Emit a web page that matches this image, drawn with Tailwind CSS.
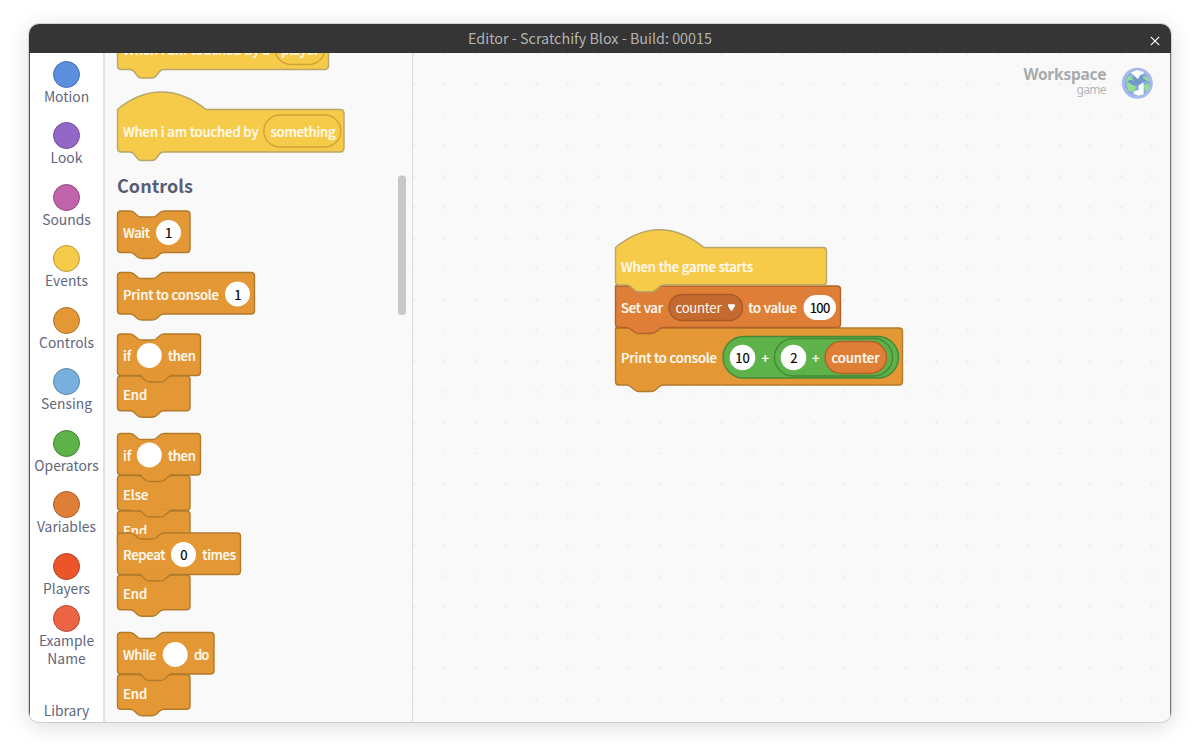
<!DOCTYPE html>
<html lang="en">
<head>
<meta charset="utf-8">
<title>Editor - Scratchify Blox</title>
<script src="https://cdn.jsdelivr.net/npm/@tailwindcss/browser@4"></script>
</head>
<body class="w-[1200px] h-[755px] overflow-hidden bg-white pt-6 pl-[29px] font-['Noto_Sans_CJK_SC','Noto_Sans',sans-serif]">
<div class="w-[1142px] h-[698px] rounded-[10px] overflow-hidden flex flex-col bg-[#f9f9f9] shadow-[0_4px_22px_rgba(0,0,0,0.14),0_0_0_1px_rgba(0,0,0,0.12)]">
  <header class="h-[29px] shrink-0 bg-[#353535] grid grid-cols-[40px_1fr_40px] items-center text-[#b4b4b4]">
    <span></span>
    <h1 class="text-center text-[14.35px] leading-[28px] pb-[2px] whitespace-nowrap -translate-x-[10px]">Editor - Scratchify Blox - Build: 00015</h1>
    <svg class="w-3 h-3 ml-[17.5px] mt-[4px]" viewBox="0 0 12 12" fill="none" stroke="#fff" stroke-width="1.2"><path d="M1.800 1.800l8.400 8.400M10.200 1.800l-8.400 8.400"/></svg>
  </header>
  <div class="flex flex-1 min-h-0">
    <nav class="w-[76px] shrink-0 bg-white border-l border-l-[#555] border-r-2 border-r-[#e2e2e2] flex flex-col items-center pt-[7.5px] text-[#5f667b] text-[13.85px] leading-[18.4px] text-center">
      <a class="h-[61.5px] shrink-0 flex flex-col items-center"><i class="w-[27px] h-[27px] rounded-full border border-[#3f6fb8] bg-[#5b8edc] -mb-px"></i>Motion</a>
      <a class="h-[61.5px] shrink-0 flex flex-col items-center"><i class="w-[27px] h-[27px] rounded-full border border-[#704a9c] bg-[#9367c8] -mb-px"></i>Look</a>
      <a class="h-[61.5px] shrink-0 flex flex-col items-center"><i class="w-[27px] h-[27px] rounded-full border border-[#934880] bg-[#c163ab] -mb-px"></i>Sounds</a>
      <a class="h-[61.5px] shrink-0 flex flex-col items-center"><i class="w-[27px] h-[27px] rounded-full border border-[#b89735] bg-[#f6cb49] -mb-px"></i>Events</a>
      <a class="h-[61.5px] shrink-0 flex flex-col items-center"><i class="w-[27px] h-[27px] rounded-full border border-[#aa7024] bg-[#e39835] -mb-px"></i>Controls</a>
      <a class="h-[61.5px] shrink-0 flex flex-col items-center"><i class="w-[27px] h-[27px] rounded-full border border-[#5683a6] bg-[#77b0df] -mb-px"></i>Sensing</a>
      <a class="h-[61.5px] shrink-0 flex flex-col items-center"><i class="w-[27px] h-[27px] rounded-full border border-[#448035] bg-[#5db34a] -mb-px"></i>Operators</a>
      <a class="h-[61.5px] shrink-0 flex flex-col items-center"><i class="w-[27px] h-[27px] rounded-full border border-[#a65b28] bg-[#df7e37] -mb-px"></i>Variables</a>
      <a class="h-[52px] shrink-0 flex flex-col items-center"><i class="w-[27px] h-[27px] rounded-full border border-[#b23d1d] bg-[#eb5529] -mb-px"></i>Players</a>
      <a class="h-[96.500px] shrink-0 flex flex-col items-center"><i class="w-[27px] h-[27px] rounded-full border border-[#b54732] bg-[#ec6443] -mb-[0.5px]"></i>Example<br>Name</a>
      <a>Library</a>
    </nav>
    <section class="w-[308px] shrink-0 bg-[#f9f9f9] border-r border-[#dcdcdc]">
      <svg class="block w-[307px] h-[669px]" viewBox="105 53 307 669" font-size="13.1" font-weight="500" fill="#fffaf0">
        <g stroke-width="1.4">
          <g fill="#f6cb49" stroke="#b8a56a">
            <path d="M117.5 40H328.500V65.500Q328.500 69.500 324.500 69.500H164Q161 69.500 159.500 71.500L156 76Q154.500 78 152 78H141.500Q139 78 137.500 76L134 71.500Q132.500 69.500 129.500 69.500H121.500Q117.500 69.500 117.500 65.500Z"/>
            <path d="M117.500 109.500C145 86.500 177 86 206 109.500H340Q344 109.500 344 113.500V148Q344 152 340 152H164Q161 152 159.500 154L156 158.500Q154.500 160.500 152 160.500H141.500Q139 160.500 137.500 158.500L134 154Q132.500 152 129.500 152H121.500Q117.500 152 117.500 148Z"/>
          </g>
          <g fill="none" stroke="#cfa336">
            <rect x="275" y="32.500" width="50" height="32" rx="16"/>
            <rect x="263.800" y="115" width="77" height="32" rx="16"/>
          </g>
          <g fill="#e39835" stroke="#b27a2b" stroke-linejoin="round">
            <path d="M117.500 214.500Q117.500 211 121 211H129.500Q132.500 211 134 212.500L138 216Q139.500 217 142 217H152Q154.500 217 156 216L160 212.500Q161.500 211 164.500 211H186.500Q190 211 190 214.500V249Q190 252.500 186.500 252.500H164.500Q161.500 252.500 160 254L156 257.500Q154.500 258.500 152 258.500H142Q139.500 258.500 138 257.500L134 254Q132.500 252.500 129.500 252.500H121Q117.500 252.500 117.500 249Z"/>
            <path d="M117.500 276Q117.500 272.500 121 272.500H129.500Q132.500 272.500 134 274L138 277.500Q139.500 278.500 142 278.500H152Q154.500 278.500 156 277.500L160 274Q161.500 272.500 164.500 272.500H251Q254.500 272.500 254.500 276V310.500Q254.500 314 251 314H164.500Q161.500 314 160 315.500L156 319Q154.500 320 152 320H142Q139.500 320 138 319L134 315.500Q132.500 314 129.500 314H121Q117.500 314 117.500 310.500Z"/>
          </g>
        </g>
        <defs>
          <g id="end">
            <path d="M0.500 4Q0.500 0.500 4 0.500H69.500Q73 0.500 73 4V31.800Q73 35.300 69.500 35.300H47.500Q44.500 35.300 43 36.800L39 40.500Q37.500 41.700 35 41.700H25Q22.500 41.700 21 40.500L17 36.800Q15.500 35.300 12.500 35.300H4Q0.500 35.300 0.500 31.800Z"/>
            <path stroke="none" d="M23.500 -1H53.500L49.500 3H27.500Z"/>
            <path fill="none" d="M20.500 0.500Q23.500 0.500 25 2L29 5.500Q30.500 6.500 33 6.500H43Q45.500 6.500 47 5.500L51 2Q52.500 0.500 55.500 0.500"/>
          </g>
          <path id="head84" d="M0.500 4Q0.500 0.500 4 0.500H12.500Q15.500 0.500 17 2L21 5.500Q22.500 6.500 25 6.500H35Q37.500 6.500 39 5.500L43 2Q44.500 0.500 47.500 0.500H80Q83.500 0.500 83.500 4V38.500Q83.500 42 80 42H4Q0.500 42 0.500 38.500Z"/>
          <path id="head124" d="M0.500 4Q0.500 0.500 4 0.500H12.500Q15.500 0.500 17 2L21 5.500Q22.500 6.500 25 6.500H35Q37.500 6.500 39 5.500L43 2Q44.500 0.500 47.500 0.500H120Q123.500 0.500 123.500 4V38.500Q123.500 42 120 42H4Q0.500 42 0.500 38.500Z"/>
          <path id="head97" d="M0.500 4Q0.500 0.500 4 0.500H12.500Q15.500 0.500 17 2L21 5.500Q22.500 6.500 25 6.500H35Q37.500 6.500 39 5.500L43 2Q44.500 0.500 47.500 0.500H93.500Q97 0.500 97 4V38.500Q97 42 93.500 42H4Q0.500 42 0.500 38.500Z"/>
        </defs>
        <g fill="#e39835" stroke="#b27a2b" stroke-width="1.4">
          <use href="#head84" x="117" y="333.500"/><use href="#end" x="117" y="375.500"/>
          <use href="#head84" x="117" y="433"/><use href="#end" x="117" y="475"/>
          <use href="#end" x="117" y="510.500"/>
        </g>
        <text x="123" y="535.500" stroke="#fffaf0" stroke-width=".2">End</text>
        <g fill="#e39835" stroke="#b27a2b" stroke-width="1.4">
          <path d="M118.500 534h71v8h-71z" stroke="none"/>
          <use href="#head124" x="117" y="532.500"/><use href="#end" x="117" y="574.500"/>
          <use href="#head97" x="117" y="632"/><use href="#end" x="117" y="674"/>
        </g>
        <g stroke="#fffaf0" stroke-width=".2">
          <text x="123" y="55" textLength="147">When i am touched by a</text><text x="281" y="55" textLength="38">player</text>
          <text x="123" y="136.500" textLength="135.500">When i am touched by</text><text x="270.500" y="136.500" textLength="65">something</text>
          <text x="123" y="238" textLength="27">Wait</text>
          <text x="123" y="299.500" textLength="96">Print to console</text>
          <text x="123" y="361">if</text><text x="168" y="361" textLength="27.800">then</text><text x="123" y="400">End</text>
          <text x="123" y="460.500">if</text><text x="168" y="460.500" textLength="27.800">then</text><text x="123" y="499.500">Else</text>
          <text x="123" y="560" textLength="42.500">Repeat</text><text x="202.300" y="560" textLength="33.700">times</text><text x="123" y="599">End</text>
          <text x="123" y="659.500" textLength="33.500">While</text><text x="194" y="659.500" textLength="15.300">do</text><text x="123" y="698.500">End</text>
        </g>
        <text x="117" y="193" font-size="18" font-weight="700" fill="#575e75" textLength="76">Controls</text>
        <g fill="#fff"><circle cx="168.500" cy="232.500" r="12.500"/><circle cx="237.500" cy="294" r="12.500"/><circle cx="149.300" cy="355.500" r="12.500"/><circle cx="149.300" cy="455" r="12.500"/><circle cx="183.500" cy="554.500" r="12.500"/><circle cx="175.200" cy="654.500" r="12.500"/></g>
        <g fill="#000" text-anchor="middle" font-weight="400" stroke="#000" stroke-width=".2"><text x="168.700" y="238">1</text><text x="238" y="299.500">1</text><text x="184" y="560">0</text></g>
        <rect x="398" y="175.500" width="8" height="139.500" rx="3.500" fill="#c7c7c7"/>
      </svg>
    </section>
    <main class="flex-1 min-w-0 border-r border-r-[#777]">
      <svg class="block w-[757px] h-[669px]" viewBox="413 53 757 669" font-size="13.100" font-weight="500" fill="#fffaf0">
        <defs><pattern id="dots" x="398.600" y="38.300" width="30.740" height="30.740" patternUnits="userSpaceOnUse"><rect x="14.600" y="14.600" width="1.500" height="1.500" fill="#e2e2e2"/></pattern></defs>
        <rect x="413" y="53" width="757" height="669" fill="url(#dots)"/>
        <g stroke-width="1.4">
          <path fill="#e39835" stroke="#b27a2b" d="M615.500 328H899Q902.500 328 902.500 331.500V381.500Q902.500 385 899 385H664Q661 385 659.500 386.500L655 390.300Q653.500 391.500 651 391.500H639Q636.500 391.500 635 390.300L630.500 386.500Q629 385 626 385H619Q615.500 385 615.500 381.500Z"/>
          <path fill="#df7e37" stroke="#b0622a" d="M615.500 286H837Q840.500 286 840.500 289.500V324Q840.500 327.500 837 327.500H664Q661 327.500 659.500 329L655 332.500Q653.500 333.500 651 333.500H639Q636.500 333.500 635 332.500L630.500 329Q629 327.500 626 327.500H619Q615.500 327.500 615.500 324Z"/>
          <path fill="#f6cb49" stroke="#b8a56a" d="M615.500 247.500C643 224.500 674 223 704 247.500H823Q826.500 247.500 826.500 251V281.500Q826.500 285 823 285H664Q661 285 659.500 286.500L655 290.500Q653.500 291.700 651 291.700H639Q636.500 291.700 635 290.500L630.500 286.500Q629 285 626 285H619Q615.500 285 615.500 281.500Z"/>
          <rect x="669" y="294.500" width="73.500" height="26" rx="13" fill="#c46a2e" stroke="#a85b26"/>
          <rect x="723" y="336.500" width="175.500" height="41.500" rx="20.750" fill="#5db34a" stroke="#468837"/>
          <rect x="774.500" y="338.500" width="118" height="37.500" rx="18.750" fill="#5db34a" stroke="#468837"/>
          <rect x="825" y="341.500" width="61.500" height="32" rx="16" fill="#df7e37" stroke="#b0622a"/>
        </g>
        <path fill="#fff" d="M728 305.700Q727.500 304.300 729 304.300H734Q735.700 304.300 735 306L732.500 310.200Q731.500 311.400 730.500 310.200Z"/>
        <rect x="803.500" y="295" width="32.500" height="25" rx="12.500" fill="#fff"/>
        <circle cx="742.500" cy="357.500" r="12.800" fill="#fff"/><circle cx="793.500" cy="357.500" r="12.800" fill="#fff"/>
        <g stroke="#fffaf0" stroke-width=".2">
          <text x="621" y="272" textLength="132">When the game starts</text>
          <text x="621" y="313" textLength="42">Set var</text>
          <text x="748.300" y="313" textLength="48.700">to value</text>
          <text x="621" y="363" textLength="96">Print to console</text>
          <text x="761.500" y="362.500">+</text><text x="812" y="362.500">+</text>
          <text x="831.500" y="363" textLength="48">counter</text>
        </g>
        <text x="675.500" y="313" textLength="46" font-weight="400">counter</text>
        <g fill="#000" text-anchor="middle" font-weight="400" stroke="#000" stroke-width=".2"><text x="820" y="313" textLength="20.500">100</text><text x="742.500" y="363">10</text><text x="794" y="363">2</text></g>
        <text x="1106.500" y="80" text-anchor="end" font-family="Noto Sans" font-size="15.500" font-weight="700" fill="#a8abab" textLength="83">Workspace</text>
        <text x="1106.500" y="94" text-anchor="end" font-family="Noto Sans" font-size="12" font-weight="400" fill="#b5b7b7" textLength="30">game</text>
        <g transform="translate(1110 60) scale(.33333)">
          <circle cx="82" cy="70" r="42" fill="#86abdc" stroke="#a9b9ee" stroke-width="9"/>
          <path fill="#93e093" d="M48 62L54 50L64 44L70 62L60 66L74 74L78 82L72 96L54 92ZM98 50L112 50L119 64L104 60ZM102 76L116 70L118 86L106 96Z"/>
          <path fill="#fcfdfc" d="M62 38L80 30L102 36L94 54L80 58L72 46ZM86 74L101 68L101 103L86 107L70 102L72 94L86 90Z"/>
          <path fill="#7199cb" d="M50 66L60 59L74 62L63 51L76 50L84 58L90 46L100 42L98 55L112 63L97 64L89 75L72 77L58 69Z"/>
        </g>
      </svg>
    </main>
  </div>
</div>
</body>
</html>
